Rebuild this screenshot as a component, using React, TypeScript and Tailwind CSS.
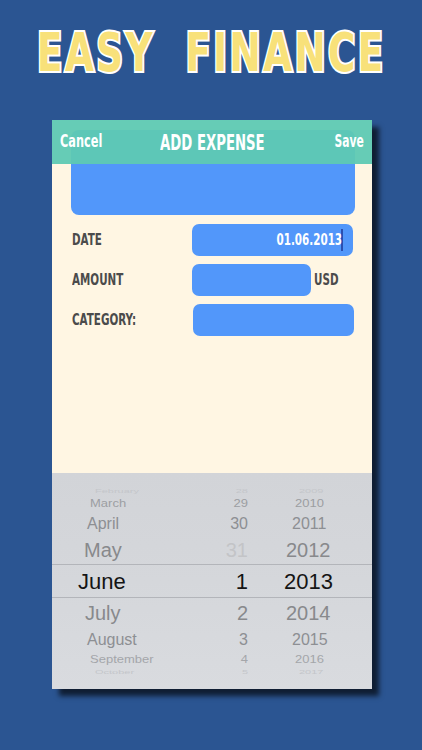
import React from "react"

const cond = "font-['DejaVu_Sans_Condensed','DejaVu_Sans',sans-serif] [font-stretch:condensed]"
const pick = "font-['Liberation_Sans',Arial,sans-serif]"

type Row = { m: string; d: string; y: string; h: number; size: number; color: string; dColor?: string; mx: number; yx: number; squash?: number }

const rows: Row[] = [
  { m: "February", d: "28", y: "2009", h: 10, size: 11, color: "#c4c6ca", mx: 95, yx: 51, squash: 0.45 },
  { m: "March", d: "29", y: "2010", h: 15, size: 13, color: "#9c9ea2", mx: 90, yx: 47, squash: 0.8 },
  { m: "April", d: "30", y: "2011", h: 25, size: 16, color: "#8d8f93", mx: 87, yx: 44 },
  { m: "May", d: "31", y: "2012", h: 28, size: 20, color: "#88898c", dColor: "#c3c4c7", mx: 84, yx: 38 },
  { m: "June", d: "1", y: "2013", h: 34, size: 22, color: "#141414", mx: 78, yx: 36 },
  { m: "July", d: "2", y: "2014", h: 29, size: 20, color: "#88898c", mx: 85, yx: 38 },
  { m: "August", d: "3", y: "2015", h: 25, size: 16, color: "#8d8f93", mx: 87, yx: 44 },
  { m: "September", d: "4", y: "2016", h: 15, size: 13, color: "#a4a6aa", mx: 90, yx: 47, squash: 0.8 },
  { m: "October", d: "5", y: "2017", h: 10, size: 11, color: "#c4c6ca", mx: 95, yx: 51, squash: 0.45 },
]

function PickerRow({ r, selected }: { r: Row; selected: boolean }) {
  const t = { transform: `scaleY(${r.squash ?? 1})` }
  return (
    <div
      className={`flex items-center ${selected ? "border-y border-[#b3b5ba]" : ""}`}
      style={{ height: r.h, color: r.color, fontSize: r.size }}
    >
      <div className="w-[170px] overflow-hidden whitespace-nowrap" style={{ paddingLeft: r.mx - 52 }}>
        <span className="inline-block" style={t}>{r.m}</span>
      </div>
      <div className="w-[26px] text-right" style={{ color: r.dColor ?? r.color }}>
        <span className="inline-block" style={t}>{r.d}</span>
      </div>
      <div className="flex-1" style={{ paddingLeft: r.yx }}>
        <span className="inline-block" style={t}>{r.y}</span>
      </div>
    </div>
  )
}

export default function App() {
  return (
    <div className="w-[422px] h-[750px] bg-[#2b5592] overflow-hidden">
      <div className="h-[120px] flex items-center justify-center pb-[14px]">
        <h1
          className={`${cond} font-bold text-[54px] leading-none whitespace-nowrap tracking-[3px] text-[#f8e17a] [-webkit-text-stroke:4px_white] [paint-order:stroke_fill] scale-x-[0.77]`}
        >
          EASY&nbsp; FINANCE
        </h1>
      </div>

      <div className="relative ml-[52px] w-[320px] h-[569px] flex flex-col shadow-[7px_7px_5px_rgba(0,0,0,0.65)]">
        <div className={`absolute top-0 left-0 right-0 h-[44px] bg-[#5ec9b3]/95 flex items-center justify-between px-[8px] text-white ${cond} font-bold`}>
          <span className="text-[17px] scale-x-[0.74] origin-left">Cancel</span>
          <span className="text-[22px] scale-x-[0.67] absolute left-[108px] origin-left whitespace-nowrap">ADD EXPENSE</span>
          <span className="text-[17px] scale-x-[0.7] origin-right">Save</span>
        </div>

        <div className="h-[353px] bg-[#fff6e3] pt-[10px]">
          <div className="h-[85px] ml-[19px] mr-[17px] rounded-[8px] bg-[#5297fa]" />

          <div className={`mt-[9px] flex flex-col gap-[8px] ${cond} font-bold text-[16px] text-[#4b4b4b]`}>
            <div className="flex items-center h-[32px]">
              <div className="w-[140px] pl-[20px]">
                <span className="inline-block scale-x-[0.72] origin-left">DATE</span>
              </div>
              <div className="w-[161px] h-[32px] rounded-[7px] bg-[#5297fa] flex items-center justify-end pr-[10px] text-white">
                <span className="scale-x-[0.72] origin-right">01.06.2013</span>
                <span className="w-[2px] h-[22px] bg-[#2a4fb0] -ml-[1px]" />
              </div>
            </div>
            <div className="flex items-center h-[32px]">
              <div className="w-[140px] pl-[20px]">
                <span className="inline-block scale-x-[0.72] origin-left">AMOUNT</span>
              </div>
              <div className="w-[119px] h-[32px] rounded-[7px] bg-[#5297fa]" />
              <span className="ml-[3px] scale-x-[0.72] origin-left">USD</span>
            </div>
            <div className="flex items-center h-[32px]">
              <div className="w-[141px] pl-[20px]">
                <span className="inline-block scale-x-[0.72] origin-left whitespace-nowrap">CATEGORY:</span>
              </div>
              <div className="w-[161px] h-[32px] rounded-[7px] bg-[#5297fa]" />
            </div>
          </div>
        </div>

        <div className={`flex-1 bg-gradient-to-b from-[#d2d4d8] via-[#d5d7db] to-[#d9dbdf] pt-[13px] ${pick}`}>
          {rows.map((r) => (
            <PickerRow key={r.m} r={r} selected={r.m === "June"} />
          ))}
        </div>
      </div>
    </div>
  )
}
